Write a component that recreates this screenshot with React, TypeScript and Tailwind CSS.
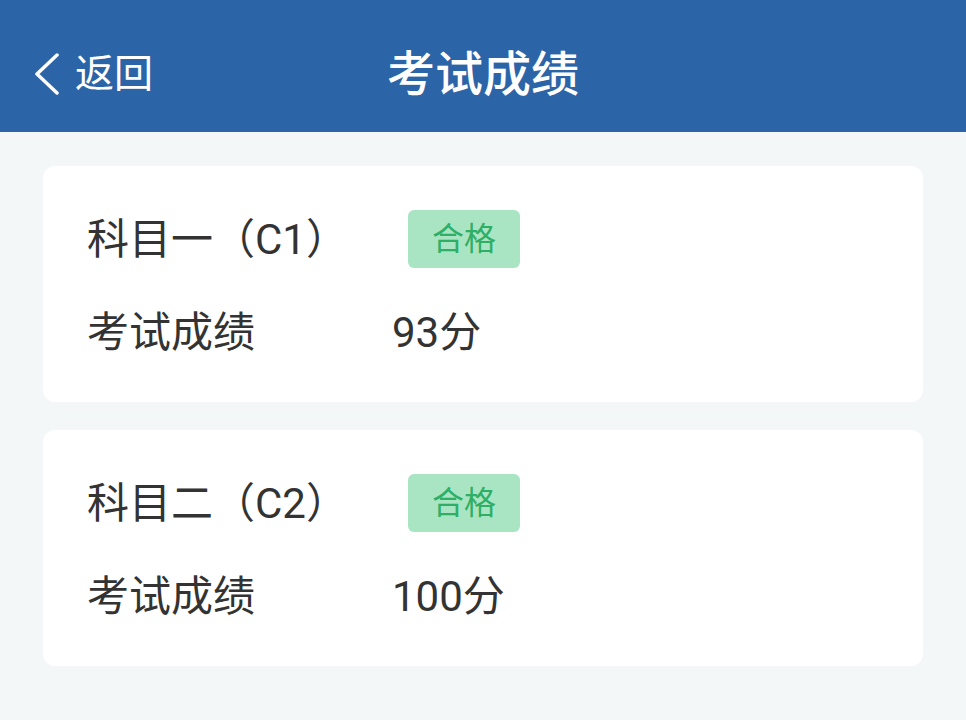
import React from 'react';

const font = { fontFamily: 'Roboto, "Noto Sans CJK SC", "Noto Sans", sans-serif' };

interface Subject {
  name: string;
  score: string;
}

const subjects: Subject[] = [
  { name: '科目一（C1）', score: '93分' },
  { name: '科目二（C2）', score: '100分' },
];

function ResultCard({ subject }: { subject: Subject }) {
  return (
    <div className="bg-white rounded-[12px] h-[236px] pt-[44px] pl-[44px]">
      <div className="flex items-center h-[58px]">
        <span className="text-[42px] leading-none text-[#333333] pt-[2px]">{subject.name}</span>
        <span className="ml-[60px] w-[112px] h-[58px] rounded-[6px] bg-[#a9e5c3] text-[#2fae66] text-[32px] flex items-center justify-center">
          合格
        </span>
      </div>
      <div className="flex items-center h-[56px] mt-[36px] text-[42px] text-[#333333]">
        <span className="w-[305px]">考试成绩</span>
        <span>{subject.score}</span>
      </div>
    </div>
  );
}

export default function App() {
  return (
    <div className="w-[966px] h-[720px] bg-[#f3f7f8] overflow-hidden" style={font}>
      <div className="h-[132px] bg-[#2c64a8] flex items-center relative pt-[16px]">
        <div className="flex items-center pl-[33px] text-white">
          <svg width="27" height="42" viewBox="0 0 27 42" fill="none">
            <path d="M24 2 L4 21 L24 40" stroke="white" strokeWidth="3.5" strokeLinecap="round" strokeLinejoin="round" />
          </svg>
          <span className="ml-[15px] text-[39px]">返回</span>
        </div>
        <div className="absolute inset-0 pt-[18px] flex items-center justify-center text-white text-[48px] font-medium">
          考试成绩
        </div>
      </div>
      <div className="px-[43px] pt-[34px] flex flex-col gap-[28px]">
        {subjects.map(s => (
          <ResultCard key={s.name} subject={s} />
        ))}
      </div>
    </div>
  );
}
